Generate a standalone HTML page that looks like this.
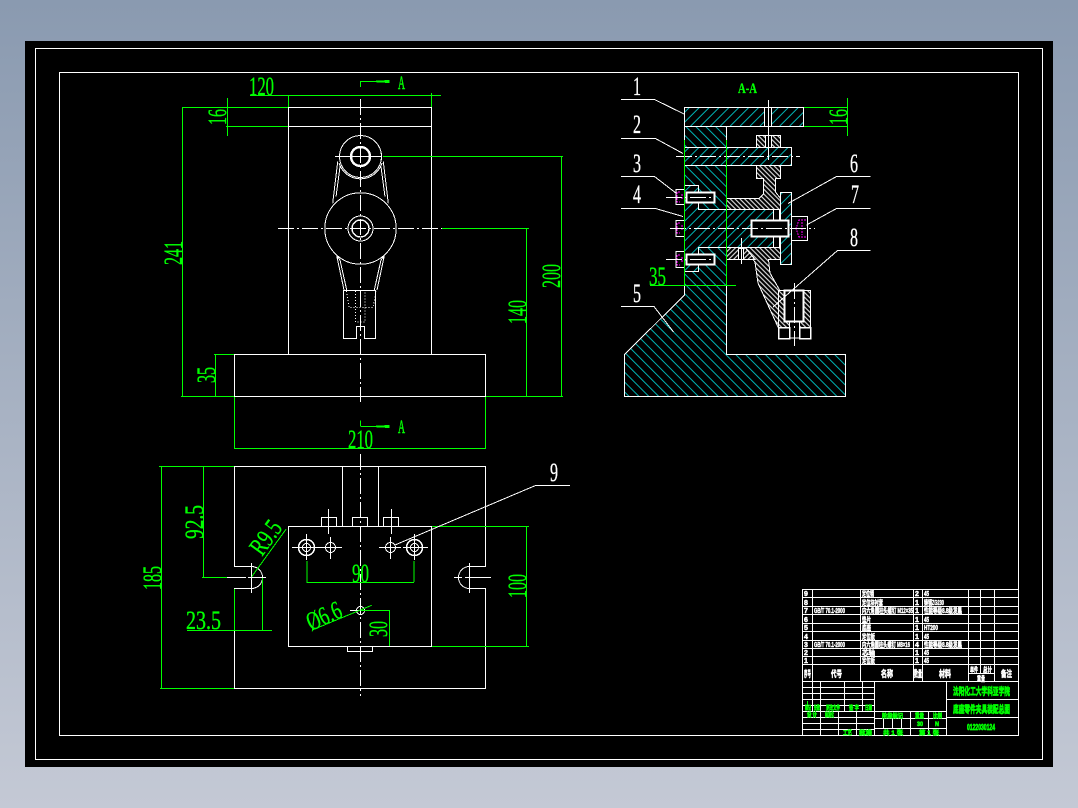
<!DOCTYPE html>
<html lang="zh">
<head>
<meta charset="utf-8">
<title>CAD</title>
<style>
html,body{margin:0;padding:0;width:1078px;height:808px;overflow:hidden;background:linear-gradient(180deg,#8a9ab0 0%,#c4c9d5 100%)}
svg{position:absolute;left:0;top:0;display:block}
.w{stroke:#fff;fill:none;stroke-width:1}
.g{stroke:#0f0;fill:none;stroke-width:1}
.c{stroke:#fff;fill:none;stroke-width:1;stroke-dasharray:16 3 2 3}
.m{stroke:#f0f;fill:none;stroke-width:1;stroke-dasharray:2 1}
.d{font-family:"Liberation Serif",serif;font-size:26px;fill:#0f0;stroke:#0f0;stroke-width:.35}
.l{font-family:"Liberation Serif",serif;font-size:26px;fill:#fff;stroke:#fff;stroke-width:.35}
.t{font-family:"Liberation Sans","Noto Sans CJK SC",sans-serif;font-size:7px;font-weight:700;fill:#fff;stroke:#fff;stroke-width:.5}
.h{font-family:"Liberation Sans","Noto Sans CJK SC",sans-serif;font-size:9px;font-weight:700;fill:#fff;stroke:#fff;stroke-width:.6}
.k{font-family:"Liberation Sans","Noto Sans CJK SC",sans-serif;font-size:6px;font-weight:700;fill:#0f0;stroke:#0f0;stroke-width:.6}
.b{font-family:"Liberation Sans","Noto Sans CJK SC",sans-serif;font-size:10px;font-weight:700;fill:#0f0;stroke:#0f0;stroke-width:.7}
</style>
</head>
<body>
<svg width="1078" height="808" viewBox="0 0 1078 808" xmlns="http://www.w3.org/2000/svg">
<defs>
<pattern id="hF" patternUnits="userSpaceOnUse" width="7" height="7" patternTransform="rotate(45)"><rect width="7" height="7" fill="#000"/><line x1="3.5" y1="0" x2="3.5" y2="7" stroke="#0ff" stroke-width=".7"/></pattern>
<pattern id="hB" patternUnits="userSpaceOnUse" width="7" height="7" patternTransform="rotate(-45)"><rect width="7" height="7" fill="#000"/><line x1="3.5" y1="0" x2="3.5" y2="7" stroke="#0ff" stroke-width=".7"/></pattern>
<pattern id="hW" patternUnits="userSpaceOnUse" width="3.4" height="3.4" patternTransform="rotate(-45)"><rect width="3.4" height="3.4" fill="#000"/><line x1="1.7" y1="0" x2="1.7" y2="3.4" stroke="#fff" stroke-width="1"/></pattern>
<pattern id="hV" patternUnits="userSpaceOnUse" width="3.4" height="3.4" patternTransform="rotate(45)"><rect width="3.4" height="3.4" fill="#000"/><line x1="1.7" y1="0" x2="1.7" y2="3.4" stroke="#fff" stroke-width="1"/></pattern>
</defs>

<rect x="25" y="41" width="1028" height="726" fill="#000"/>
<g shape-rendering="crispEdges">
<rect class="w" x="35.5" y="48.5" width="1007" height="711"/>
<rect class="w" x="59.5" y="72.5" width="959" height="663"/>

<!-- FRONT VIEW -->
<path class="w" d="M288.5 107.5H431.5V354.5H288.5ZM288.5 126.5H431.5"/>
<rect class="w" x="234.5" y="354.5" width="251" height="42"/>
<line class="c" x1="360.5" y1="99" x2="360.5" y2="402"/>
<line class="c" x1="278" y1="228.5" x2="442" y2="228.5"/>
<circle cx="360.5" cy="156.5" r="21" class="w" fill="#000"/>
<circle cx="360.5" cy="156.5" r="9.5" fill="none" stroke="#fff" stroke-width="2.4"/>
<path class="w" d="M339 163A22.5 22.5 0 0 0 382 163"/>
<line class="w" x1="335" y1="156.5" x2="382" y2="156.5"/>
<path class="w" d="M337.7 161.7L332.7 203.3M340 166.7L336 196.7M383.3 161.7L388.3 203.3M381 166.7L385 196.7"/>
<path class="w" d="M336.7 255.7L344 290M340 260L346.7 290M384.3 255.7L377 290M381 260L374.3 290M336.7 255.7L340 260M384.3 255.7L381 260"/>
<circle cx="360.5" cy="228.5" r="35.7" class="w"/>
<circle cx="360.5" cy="228.5" r="12.5" class="w"/>
<circle cx="360.5" cy="228.5" r="8.5" fill="none" stroke="#fff" stroke-width="1.4"/>
<path class="w" d="M343.5 290.5H375.5V338.5H364.5V326.5H356.5V338.5H343.5Z"/>
<path class="w" style="stroke-dasharray:1 2" d="M346.5 291L349 307.5H373L376 291M355.5 291V322H365V291"/>

<!-- PLAN VIEW -->
<path class="w" d="M234.5 566.5V466.5H485.5V566.5H469.5A11 11 0 0 0 469.5 588.5H485.5V688.5H234.5V588.5H251.5A11 11 0 0 0 251.5 566.5Z"/>
<path class="w" d="M342.5 466.5V526.5M378.5 466.5V526.5"/>
<rect class="w" x="288.5" y="526.5" width="143" height="120" fill="#000"/>
<path class="w" d="M321.5 526V517.5H336.5V526M352.5 526V517.5H367.5V526M383.5 526V517.5H398.5V526M328.5 509V534M391.5 509V534M347.5 646.5V651.5H372.5V646.5"/>
<line class="c" x1="360.5" y1="454" x2="360.5" y2="696"/>
<path class="w" d="M227 577.5H246M248 577.5H266M251.5 563V593M454 577.5H462M465 577.5H491M469.5 563V593"/>
<g>
<circle class="w" cx="306.5" cy="547.5" r="8" style="stroke-width:1.5"/><circle class="w" cx="306.5" cy="547.5" r="4"/>
<path class="w" d="M292 547.5H342M306.5 534V560"/>
<circle class="w" cx="330.5" cy="547.5" r="5"/><path class="w" d="M330.5 537V559"/>
<circle class="w" cx="414.5" cy="547.5" r="8" style="stroke-width:1.5"/><circle class="w" cx="414.5" cy="547.5" r="4"/>
<path class="w" d="M379 547.5H401M403 547.5H428M414.5 534V560"/>
<circle class="w" cx="390.5" cy="547.5" r="5"/><path class="w" d="M390.5 537V559"/>
<circle class="w" cx="360.5" cy="610.5" r="4"/><path class="w" d="M350 610.5H371"/>
</g>

<!-- FRONT DIMS -->
<path class="g" d="M250 95.5H441M288.5 95V107M431.5 93V107M182 107.5H288M226 126.5H288M227.5 98V136M182.5 107V396M181 396.5H234M214 354.5H234M215.5 354V396M383 156.5H563M561.5 156V396M442 228.5H529M526.5 228V396M486 396.5H563M234.5 397V448M485.5 397V448M234 448.5H486"/>
<path class="g" d="M360.5 87V81.5H389M360.5 426V420.5"/><path class="g" d="M360.5 426.5H389"/>
<path d="M372 81.5L389 80.5V82.5ZM372 426.5L389 425.5V427.5Z" fill="#0f0" stroke="#0f0"/>
<!-- PLAN DIMS -->
<path class="g" d="M159 466.5H234M160 688.5H234M161.5 466V688M202 577.5H227M203.5 466V577M187 630.5H272M234.5 589V630M262.5 578V631M307 561V582M414 561V582M306.5 582.5H414M361 610.5H390M389.5 610V646M432 526.5H529M432 646.5H529M526.5 526V646M251.7 576.7L286 529.3M312.3 630L371.7 605.3"/>

<!-- SECTION VIEW -->
<path d="M684.5 126.5H726.5V354.5H845.5V396.5H624.5V354.5L684.5 295Z" fill="url(#hB)" stroke="#fff"/>
<rect x="684.5" y="107.5" width="119" height="19" fill="url(#hF)" stroke="#fff"/>
<rect x="765" y="108" width="6" height="18" fill="#000"/>
<path class="w" d="M764.5 107.5V126.5M771.5 107.5V126.5"/>
<rect x="756.5" y="135.5" width="24" height="12" fill="url(#hW)" stroke="#fff"/>
<rect x="765" y="136" width="6" height="11" fill="#000"/>
<path class="w" d="M765.5 135.5V147M771.5 135.5V147"/>
<rect x="684.5" y="147.5" width="107" height="18" fill="url(#hF)" stroke="#fff"/>
<path d="M684.5 185.5H698.5V209.5H726.5V198.5H780.5V247.5H698.5V271.5H684.5Z" fill="url(#hF)"/>
<path d="M685 185.5H698.5V192M698.5 203V209.5H726.5M726.5 247.5H698.5V254M698.5 265V271.5H685" class="w"/>
<!-- upper part 6 -->
<path d="M726.5 198.5H759L763.5 194V178.5H756.5V165.5H780.5V178.5H775.5V192L780.5 198.5V209.5H726.5Z" fill="url(#hW)" stroke="#fff"/>
<!-- lower part -->
<path d="M726.5 247.5H780.5V259.5H768.5L770 273L783.5 297V327H778L758 283L755 262L745 249.5H726.5Z" fill="url(#hW)" stroke="#fff"/>
<path d="M726.5 247.5H745L755 259.5H726.5Z" fill="url(#hV)" stroke="#fff"/>
<rect x="738.5" y="248.5" width="5" height="11" fill="#000" stroke="#fff"/>
<path class="w" d="M741.5 238V264"/>
<!-- spacer plate -->
<rect x="780.5" y="192.5" width="11" height="72" fill="url(#hF)" stroke="#fff"/>
<rect x="774" y="210" width="5" height="37" fill="#000"/>
<path class="w" d="M773.5 209.5V247M779.5 209.5V247"/>
<!-- big screw -->
<rect x="751.5" y="220.5" width="37" height="16" fill="#000" stroke="#fff" stroke-width="2"/>
<rect x="791.5" y="216.5" width="16" height="24" fill="#000" stroke="#fff"/>
<path class="m" d="M806 220H799L796 228.5L799 237H806M802 222V235"/>
<!-- small screws -->
<rect x="686.5" y="192.5" width="28" height="10" fill="#000" stroke="#fff" stroke-width="2"/>
<rect x="686.5" y="254.5" width="28" height="10" fill="#000" stroke="#fff" stroke-width="2"/>
<path class="w" d="M684 189.5H676V204.5H684M684 220.5H676V236.5H684M684 251.5H676V267.5H684"/>
<path class="m" d="M680 192H677V202H680M682 194V200M680 223H677V233H680M682 225V231M680 255H677V265H680M682 257V263"/>
<line class="c" x1="676" y1="156.5" x2="800" y2="156.5"/>
<line class="c" x1="670" y1="228.5" x2="815" y2="228.5"/>
<line class="c" x1="666" y1="197.5" x2="712" y2="197.5"/>
<line class="c" x1="666" y1="259.5" x2="712" y2="259.5"/>
<line class="w" x1="768.5" y1="100" x2="768.5" y2="160"/>
<!-- part 8 housing -->
<rect x="778.5" y="290.5" width="32" height="37" fill="url(#hW)" stroke="#fff"/>
<rect x="784.5" y="290.5" width="19" height="31" fill="#000" stroke="#fff" stroke-width="2"/>
<rect x="789.5" y="322" width="10" height="16" fill="#000" stroke="#fff"/>
<rect x="778.5" y="327.5" width="11" height="11" fill="#000" stroke="#fff" stroke-width="1.5"/>
<rect x="799.5" y="327.5" width="11" height="11" fill="#000" stroke="#fff" stroke-width="1.5"/>
<line class="c" x1="794.5" y1="283" x2="794.5" y2="346"/>
<!-- section dims -->
<path d="M684.5 140V286M726.5 140V286M650 285.5H736" stroke="#0f0" stroke-width="1.3" fill="none"/>
<path class="g" d="M804 107.5H848M804 126.5H848M847.5 98V136"/>
<!-- leaders -->
<path class="w" d="M621 99.5H654.5L684 114M621 138.5H655.5L683 153.5M621 176.5H654.5L676.5 193.5M621 208.5H655.5L683 216.5M870.5 176.5H836.5L788 203.5M870.5 208.5H836.5L806.5 225M870.5 250.5H837.5L773 307M621 306.5H654L673.5 332M570 485.5H535.5L395 545"/>

<!-- TITLE BLOCK -->
<rect class="w" x="802.5" y="589.5" width="216" height="146" fill="#000"/>
<path class="w" d="M802.5 597.5H1018M802.5 606.5H1018M802.5 614.5H1018M802.5 623.5H1018M802.5 631.5H1018M802.5 640.5H1018M802.5 648.5H1018M802.5 656.5H1018M802.5 664.5H1018M802.5 681.5H1018M968.5 673.5H994M812.5 589.5V681M860.5 589.5V681M913.5 589.5V681M922.5 589.5V681M968.5 589.5V681M980.5 589.5V673M994.5 589.5V681"/>
<path class="w" d="M802.5 687.5H874M802.5 693.5H874M802.5 699.5H874M802.5 705.5H874M802.5 711.5H874M802.5 717.5H874M802.5 723.5H874M802.5 729.5H874M812.5 681.5V711M820.5 681.5V735M844.5 681.5V711M862.5 681.5V711M838.5 711V735M856.5 711V735M874.5 681.5V735.5"/>
<path class="w" d="M874.5 711.5H946M874.5 718.5H946M874.5 728.5H946M910.5 711V735M928.5 711V735M883.5 718.5V728M892.5 718.5V728M901.5 718.5V728M946.5 681.5V735.5M946.5 699.5H1018M946.5 717.5H1018"/>
</g>

<!-- DIM TEXT -->
<text class="d" x="249" y="95" textLength="25" lengthAdjust="spacingAndGlyphs">120</text>
<text class="d" style="font-size:19px;stroke-width:.6" x="398" y="89" textLength="7" lengthAdjust="spacingAndGlyphs">A</text>
<text class="d" style="font-size:19px;stroke-width:.6" x="398" y="433" textLength="7" lengthAdjust="spacingAndGlyphs">A</text>
<text class="d" transform="translate(226,125) rotate(-90)" textLength="16" lengthAdjust="spacingAndGlyphs">16</text>
<text class="d" transform="translate(182,265) rotate(-90)" textLength="24" lengthAdjust="spacingAndGlyphs">241</text>
<text class="d" transform="translate(215,383) rotate(-90)" textLength="16" lengthAdjust="spacingAndGlyphs">35</text>
<text class="d" transform="translate(560,288) rotate(-90)" textLength="24" lengthAdjust="spacingAndGlyphs">200</text>
<text class="d" transform="translate(526,324) rotate(-90)" textLength="24" lengthAdjust="spacingAndGlyphs">140</text>
<text class="d" x="348" y="448" textLength="25" lengthAdjust="spacingAndGlyphs">210</text>
<text class="d" transform="translate(161,590) rotate(-90)" textLength="24" lengthAdjust="spacingAndGlyphs">185</text>
<text class="d" transform="translate(203,539) rotate(-90)" textLength="34" lengthAdjust="spacingAndGlyphs">92.5</text>
<text class="d" x="186" y="629" textLength="35" lengthAdjust="spacingAndGlyphs">23.5</text>
<text class="d" x="352" y="582" textLength="17" lengthAdjust="spacingAndGlyphs">90</text>
<text class="d" transform="translate(387,637) rotate(-90)" textLength="16" lengthAdjust="spacingAndGlyphs">30</text>
<text class="d" transform="translate(526,598) rotate(-90)" textLength="24" lengthAdjust="spacingAndGlyphs">100</text>
<text class="d" transform="translate(262,557) rotate(-54)" textLength="36" lengthAdjust="spacingAndGlyphs">R9.5</text>
<text class="d" transform="translate(311,631) rotate(-24)" textLength="36" lengthAdjust="spacingAndGlyphs">Ø6.6</text>
<text class="d" x="649" y="285" textLength="17" lengthAdjust="spacingAndGlyphs">35</text>
<text class="d" transform="translate(847,125) rotate(-90)" textLength="16" lengthAdjust="spacingAndGlyphs">16</text>
<text class="d" style="font-size:15px;font-weight:700" x="738" y="93" textLength="19" lengthAdjust="spacingAndGlyphs">A-A</text>

<!-- LABELS -->
<text class="l" x="633" y="95" textLength="8" lengthAdjust="spacingAndGlyphs">1</text>
<text class="l" x="633" y="133" textLength="8" lengthAdjust="spacingAndGlyphs">2</text>
<text class="l" x="633" y="172" textLength="8" lengthAdjust="spacingAndGlyphs">3</text>
<text class="l" x="633" y="203" textLength="8" lengthAdjust="spacingAndGlyphs">4</text>
<text class="l" x="633" y="302" textLength="8" lengthAdjust="spacingAndGlyphs">5</text>
<text class="l" x="850" y="172" textLength="8" lengthAdjust="spacingAndGlyphs">6</text>
<text class="l" x="851" y="203" textLength="8" lengthAdjust="spacingAndGlyphs">7</text>
<text class="l" x="850" y="246" textLength="8" lengthAdjust="spacingAndGlyphs">8</text>
<text class="l" x="550" y="481" textLength="8" lengthAdjust="spacingAndGlyphs">9</text>

<!-- TABLE TEXT -->
<text class="t" x="804" y="596">9</text><text class="t" x="862" y="596" textLength="12" lengthAdjust="spacingAndGlyphs">定位销</text><text class="t" x="915" y="596">2</text><text class="t" x="924" y="596" textLength="5" lengthAdjust="spacingAndGlyphs">45</text>
<text class="t" x="804" y="605">8</text><text class="t" x="862" y="605" textLength="21" lengthAdjust="spacingAndGlyphs">定位块衬套</text><text class="t" x="915" y="605">1</text><text class="t" x="924" y="605" textLength="20" lengthAdjust="spacingAndGlyphs">铸钢ZG230</text>
<text class="t" x="804" y="613">7</text><text class="t" x="814" y="613" textLength="31" lengthAdjust="spacingAndGlyphs">GB/T 70.1-2000</text><text class="t" x="862" y="613" textLength="51" lengthAdjust="spacingAndGlyphs">内六角圆柱头螺钉 M12×35</text><text class="t" x="915" y="613">1</text><text class="t" x="924" y="613" textLength="38" lengthAdjust="spacingAndGlyphs">性能等级8.8级发黑</text>
<text class="t" x="804" y="622">6</text><text class="t" x="862" y="622" textLength="9" lengthAdjust="spacingAndGlyphs">垫片</text><text class="t" x="915" y="622">1</text><text class="t" x="924" y="622" textLength="5" lengthAdjust="spacingAndGlyphs">45</text>
<text class="t" x="804" y="630">5</text><text class="t" x="862" y="630" textLength="9" lengthAdjust="spacingAndGlyphs">底座</text><text class="t" x="915" y="630">1</text><text class="t" x="924" y="630" textLength="14" lengthAdjust="spacingAndGlyphs">HT200</text>
<text class="t" x="804" y="639">4</text><text class="t" x="862" y="639" textLength="13" lengthAdjust="spacingAndGlyphs">定位板</text><text class="t" x="915" y="639">1</text><text class="t" x="924" y="639" textLength="5" lengthAdjust="spacingAndGlyphs">45</text>
<text class="t" x="804" y="647">3</text><text class="t" x="814" y="647" textLength="31" lengthAdjust="spacingAndGlyphs">GB/T 70.1-2000</text><text class="t" x="862" y="647" textLength="48" lengthAdjust="spacingAndGlyphs">内六角圆柱头螺钉 M8×16</text><text class="t" x="915" y="647">4</text><text class="t" x="924" y="647" textLength="38" lengthAdjust="spacingAndGlyphs">性能等级8.8级发黑</text>
<text class="t" x="804" y="655">2</text><text class="t" x="862" y="655" textLength="13" lengthAdjust="spacingAndGlyphs">芯轴</text><text class="t" x="915" y="655">1</text><text class="t" x="924" y="655" textLength="5" lengthAdjust="spacingAndGlyphs">45</text>
<text class="t" x="804" y="663">1</text><text class="t" x="862" y="663" textLength="13" lengthAdjust="spacingAndGlyphs">定位板</text><text class="t" x="915" y="663">1</text><text class="t" x="924" y="663" textLength="5" lengthAdjust="spacingAndGlyphs">45</text>

<text class="h" x="804" y="677" textLength="7" lengthAdjust="spacingAndGlyphs">序号</text>
<text class="h" x="831" y="677" textLength="11" lengthAdjust="spacingAndGlyphs">代号</text>
<text class="h" x="881" y="677" textLength="12" lengthAdjust="spacingAndGlyphs">名称</text>
<text class="h" x="914" y="677" textLength="8" lengthAdjust="spacingAndGlyphs">数量</text>
<text class="h" x="939" y="677" textLength="12" lengthAdjust="spacingAndGlyphs">材料</text>
<text class="t" x="970" y="672" textLength="8" lengthAdjust="spacingAndGlyphs">单件</text>
<text class="t" x="983" y="672" textLength="9" lengthAdjust="spacingAndGlyphs">总计</text>
<text class="t" x="977" y="681" textLength="8" lengthAdjust="spacingAndGlyphs">重量</text>
<text class="h" x="1001" y="677" textLength="11" lengthAdjust="spacingAndGlyphs">备注</text>

<text class="b" x="953" y="695" textLength="57" lengthAdjust="spacingAndGlyphs">沈阳化工大学科亚学院</text>
<text class="b" x="953" y="713" textLength="57" lengthAdjust="spacingAndGlyphs">底座零件夹具装配总图</text>
<text class="b" style="font-size:8px" x="967" y="730" textLength="28" lengthAdjust="spacingAndGlyphs">0122030124</text>
<rect x="807" y="701" width="1" height="4" fill="#0f0"/>
<text class="k" x="805" y="710" textLength="6" lengthAdjust="spacingAndGlyphs">标记</text>
<text class="k" x="814" y="710" textLength="6" lengthAdjust="spacingAndGlyphs">处数</text>
<text class="k" x="826" y="710" textLength="14" lengthAdjust="spacingAndGlyphs">更改文件</text>
<text class="k" x="849" y="710" textLength="10" lengthAdjust="spacingAndGlyphs">签 字</text>
<text class="k" x="865" y="710" textLength="7" lengthAdjust="spacingAndGlyphs">日期</text>
<text class="k" x="807" y="717" textLength="10" lengthAdjust="spacingAndGlyphs">设 计</text>
<text class="k" x="825" y="717" textLength="9" lengthAdjust="spacingAndGlyphs">标准化</text>
<text class="k" x="843" y="735" textLength="9" lengthAdjust="spacingAndGlyphs">工艺</text>
<text class="k" x="859" y="735" textLength="13" lengthAdjust="spacingAndGlyphs">批准</text>
<text class="k" x="882" y="718" textLength="21" lengthAdjust="spacingAndGlyphs">阶段标记</text>
<text class="k" x="915" y="718" textLength="9" lengthAdjust="spacingAndGlyphs">重量</text>
<text class="k" x="933" y="718" textLength="9" lengthAdjust="spacingAndGlyphs">比例</text>
<text class="k" x="917" y="726" textLength="6" lengthAdjust="spacingAndGlyphs">30</text>
<text class="k" x="935" y="726" textLength="4" lengthAdjust="spacingAndGlyphs">N</text>
<text class="k" x="883" y="735" textLength="20" lengthAdjust="spacingAndGlyphs">共 1 张</text>
<text class="k" x="919" y="735" textLength="20" lengthAdjust="spacingAndGlyphs">第 1 张</text>
</svg>
</body>
</html>
